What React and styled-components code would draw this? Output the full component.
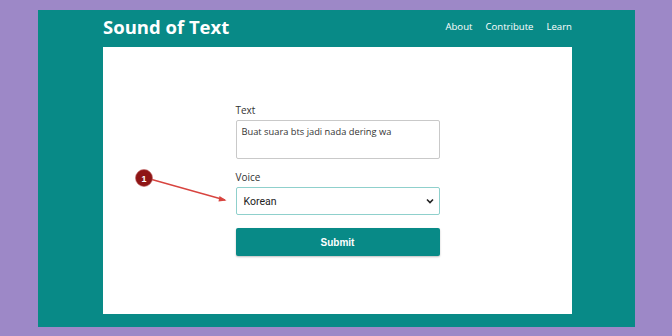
import React from "react";
import styled, { createGlobalStyle } from "styled-components";

const Global = createGlobalStyle`
  html, body { margin: 0; padding: 0; }
  body {
    background: #9d88c7;
    font-family: "Open Sans", "Noto Sans", sans-serif;
    width: 672px;
    height: 336px;
    overflow: hidden;
  }
`;

const Frame = styled.div`
  position: relative;
  margin: 10px 0 0 38px;
  width: 597px;
  height: 317px;
  background: #088a87;
  display: flex;
  flex-direction: column;
  align-items: center;
  padding-left: 2px;
  box-sizing: border-box;
`;

const Header = styled.header`
  width: 469px;
  height: 37px;
  display: flex;
  align-items: center;
  justify-content: space-between;
`;

const Title = styled.h1`
  margin: 0;
  font-size: 18.5px;
  font-weight: 700;
  color: #ffffff;
  position: relative;
  top: -2px;
`;

const Nav = styled.nav`
  display: flex;
  gap: 13px;
  position: relative;
  top: -2px;
`;

const NavLink = styled.a`
  color: #ffffff;
  font-size: 9.6px;
  text-decoration: none;
`;

const Panel = styled.main`
  width: 469px;
  height: 267px;
  background: #ffffff;
  display: flex;
  justify-content: center;
  padding-top: 56px;
  box-sizing: border-box;
`;

const Form = styled.form`
  width: 204px;
  display: flex;
  flex-direction: column;
`;

const Label = styled.label`
  font-size: 10px;
  color: #333;
  line-height: 14px;
  margin-bottom: 3px;
`;

const TextArea = styled.div`
  height: 39px;
  border: 1px solid #c9c9c9;
  border-radius: 2px;
  box-sizing: border-box;
  padding: 4px 5px;
  font-size: 9.3px;
  color: #333;
  margin-bottom: 11px;
`;

const Select = styled.div`
  height: 28px;
  border: 1px solid #8fd0cc;
  border-radius: 2px;
  box-sizing: border-box;
  display: flex;
  align-items: center;
  justify-content: space-between;
  padding: 0 5px 0 7px;
  font-family: Roboto, "Liberation Sans", sans-serif;
  font-size: 10.5px;
  color: #222;
  margin-bottom: 13px;
`;

const Button = styled.button`
  height: 28px;
  border: none;
  border-radius: 2px;
  background: #088a87;
  color: #fff;
  font-family: "Liberation Sans", Arial, sans-serif;
  font-weight: 700;
  font-size: 10px;
  box-shadow: 0 1px 2px rgba(0,0,0,0.25);
`;

const Annotation = styled.svg`
  position: absolute;
  left: 0;
  top: 0;
  overflow: visible;
  pointer-events: none;
`;

export default function App() {
  return (
    <>
      <Global />
      <Frame>
        <Header>
          <Title>Sound of Text</Title>
          <Nav>
            <NavLink>About</NavLink>
            <NavLink>Contribute</NavLink>
            <NavLink>Learn</NavLink>
          </Nav>
        </Header>
        <Panel>
          <Form onSubmit={(e) => e.preventDefault()}>
            <Label>Text</Label>
            <TextArea>Buat suara bts jadi nada dering wa</TextArea>
            <Label>Voice</Label>
            <Select>
              <span>Korean</span>
              <svg width="8" height="6" viewBox="0 0 8 6">
                <path d="M1 1.5 L4 4.5 L7 1.5" fill="none" stroke="#222" strokeWidth="1.6" />
              </svg>
            </Select>
            <Button type="submit">Submit</Button>
          </Form>
        </Panel>
        <Annotation width="597" height="317">
          <line x1="112" y1="169" x2="187" y2="190" stroke="#d8443f" strokeWidth="1.3" />
          <path d="M188.5 190.5 L181.5 186 L180.5 191.5 Z" fill="#d8443f" />
          <circle cx="106" cy="168" r="8.5" fill="#8e1515" stroke="#c46a6a" strokeWidth="0.6" />
          <text x="106" y="171.5" textAnchor="middle" fill="#fff" fontSize="9" fontWeight="700" fontFamily="Liberation Sans, sans-serif">1</text>
        </Annotation>
      </Frame>
    </>
  );
}
